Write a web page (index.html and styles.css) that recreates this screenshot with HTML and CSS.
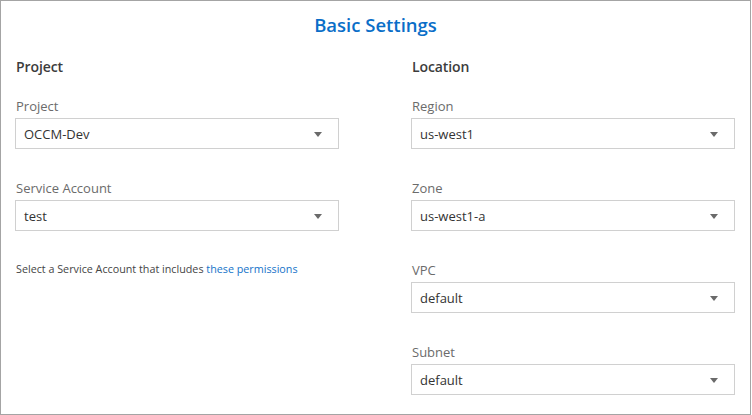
FILE: index.html
```html
<!DOCTYPE html>
<html>
<head>
<meta charset="utf-8">
<link rel="stylesheet" href="styles.css">
</head>
<body>
<div class="panel">
  <h1 class="title">Basic Settings</h1>
  <div class="columns">
    <div class="col">
      <h2 class="section">Project</h2>
      <div class="field">
        <div class="label">Project</div>
        <div class="select"><span>OCCM-Dev</span><i class="caret"></i></div>
      </div>
      <div class="field">
        <div class="label">Service Account</div>
        <div class="select"><span>test</span><i class="caret"></i></div>
      </div>
      <p class="help">Select a Service Account that includes <a class="link">these permissions</a></p>
    </div>
    <div class="col">
      <h2 class="section">Location</h2>
      <div class="field">
        <div class="label">Region</div>
        <div class="select"><span>us-west1</span><i class="caret"></i></div>
      </div>
      <div class="field">
        <div class="label">Zone</div>
        <div class="select"><span>us-west1-a</span><i class="caret"></i></div>
      </div>
      <div class="field">
        <div class="label">VPC</div>
        <div class="select"><span>default</span><i class="caret"></i></div>
      </div>
      <div class="field">
        <div class="label">Subnet</div>
        <div class="select"><span>default</span><i class="caret"></i></div>
      </div>
    </div>
  </div>
</div>
</body>
</html>
```

FILE: styles.css
```css
html, body {
  margin: 0;
  padding: 0;
  background: #fff;
}
body {
  font-family: "Open Sans", "Noto Sans", sans-serif;
}
.panel {
  box-sizing: border-box;
  width: 751px;
  height: 415px;
  border: 1px solid #a4a4a4;
  overflow: hidden;
}
.title {
  margin: 10px 0 0;
  font-size: 18.5px;
  line-height: 28px;
  font-weight: 600;
  color: #0a6ec8;
  text-align: center;
}
.columns {
  display: grid;
  grid-template-columns: 324px 324px;
  column-gap: 72px;
  padding-left: 14px;
  margin-top: 18px;
}
.section {
  margin: 0 0 20px 1px;
  font-size: 14px;
  line-height: 20px;
  font-weight: 600;
  color: #3c3c3c;
  letter-spacing: -0.1px;
}
.field {
  margin-bottom: 30px;
}
.field:last-child {
  margin-bottom: 0;
}
.label {
  font-size: 13px;
  line-height: 18px;
  color: #6b6b6b;
  margin: 0 0 3px 1px;
}
.select {
  box-sizing: border-box;
  height: 31px;
  border: 1px solid #d0d0d0;
  display: flex;
  align-items: center;
  justify-content: space-between;
  padding: 0 16px 0 8px;
  font-size: 13px;
  color: #333;
}
.caret {
  width: 0;
  height: 0;
  border-left: 4px solid transparent;
  border-right: 4px solid transparent;
  border-top: 5px solid #6a6a6a;
  margin-top: 1px;
}
.help {
  margin: 2px 0 0 1px;
  font-size: 10.75px;
  line-height: 16px;
  color: #444;
}
.link {
  color: #1473c9;
  text-decoration: none;
}
```
